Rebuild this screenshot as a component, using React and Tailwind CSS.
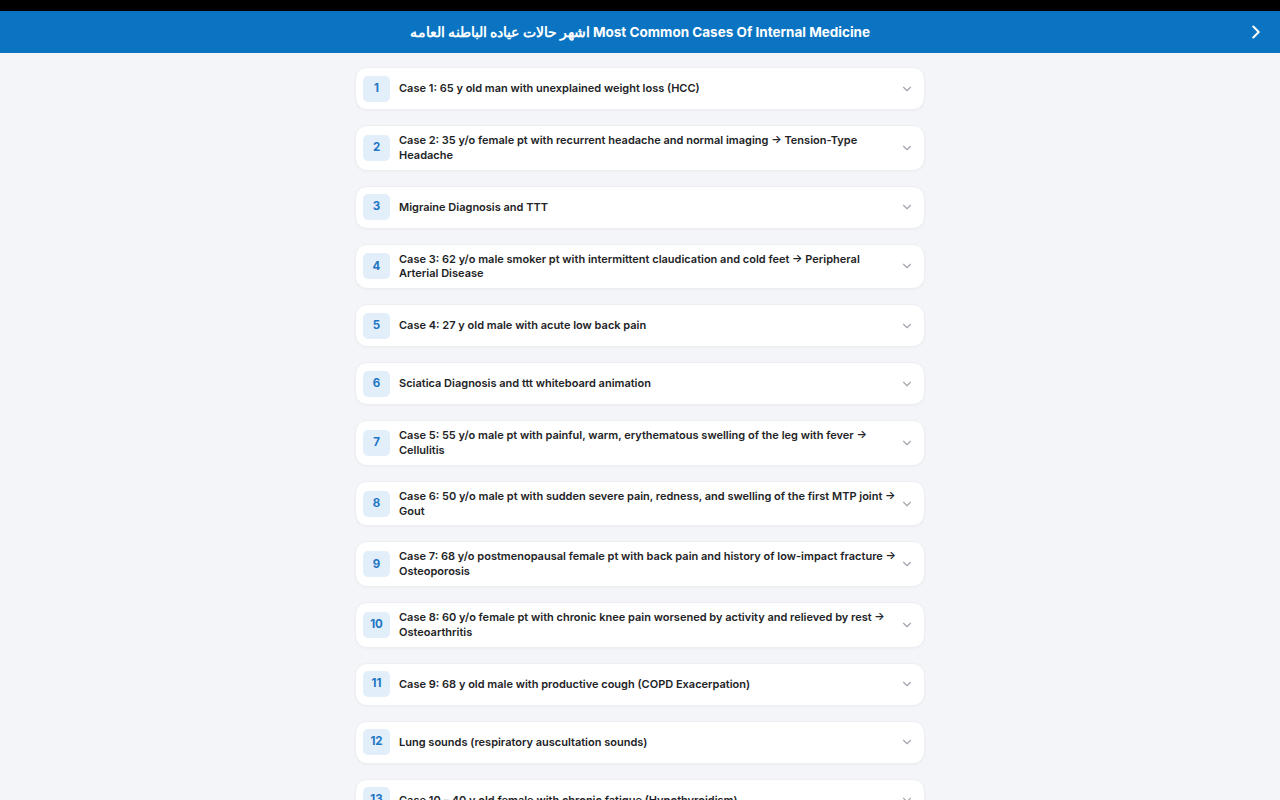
import { ChevronDown, ChevronRight } from 'lucide-react';

const cases = [
  'Case 1: 65 y old man with unexplained weight loss (HCC)',
  'Case 2: 35 y/o female pt with recurrent headache and normal imaging → Tension-Type Headache',
  'Migraine Diagnosis and TTT',
  'Case 3: 62 y/o male smoker pt with intermittent claudication and cold feet → Peripheral Arterial Disease',
  'Case 4:  27 y old male with acute low back pain',
  'Sciatica Diagnosis and ttt whiteboard animation',
  'Case 5: 55 y/o male pt with painful, warm, erythematous swelling of the leg with fever → Cellulitis',
  'Case 6: 50 y/o male pt with sudden severe pain, redness, and swelling of the first MTP joint → Gout',
  'Case 7: 68 y/o postmenopausal female pt with back pain and history of low-impact fracture → Osteoporosis',
  'Case 8: 60 y/o female pt with chronic knee pain worsened by activity and relieved by rest → Osteoarthritis',
  'Case 9: 68 y old male with productive cough (COPD Exacerpation)',
  'Lung sounds (respiratory auscultation sounds)',
  'Case 10 –  40 y old female with chronic fatigue (Hypothyroidism)',
  'Case 11: 45 y/o male pt with epigastric pain → Peptic Ulcer Disease',
];

export default function App() {
  return (
    <div className="h-[800px] overflow-hidden bg-[#f4f5f9] font-['Inter',sans-serif]">
      <div className="h-[11px] bg-black" />
      <header className="h-[42px] bg-[#0a74c2] flex items-center justify-center relative text-white">
        <h1 className="text-[13.5px] font-bold">
          اشهر حالات عياده الباطنه العامه Most Common Cases Of Internal Medicine
        </h1>
        <ChevronRight size={22} strokeWidth={2.2} className="absolute right-[13px] top-[10px]" />
      </header>

      <main className="w-[570px] mx-auto pt-[14px] flex flex-col gap-[15px]">
        {cases.map((title, i) => (
          <div
            key={i}
            className="bg-white rounded-xl border border-[#eceef2] shadow-[0_1px_2px_rgba(0,0,0,0.03)] flex items-center min-h-[43px] pl-[7px] pr-[10px] py-[7px]"
          >
            <div className="w-[27px] h-[26px] shrink-0 rounded-[5px] bg-[#e2eef9] text-[#1f76c4] text-[11.5px] font-bold flex items-center justify-center">
              {i + 1}
            </div>
            <div className="flex-1 ml-[9px] mr-[1px] text-[11px] leading-[14.8px] font-semibold text-[#222326]">
              {title}
            </div>
            <ChevronDown size={14} strokeWidth={2} className="text-[#a3a6ad] shrink-0" />
          </div>
        ))}
      </main>
    </div>
  );
}
